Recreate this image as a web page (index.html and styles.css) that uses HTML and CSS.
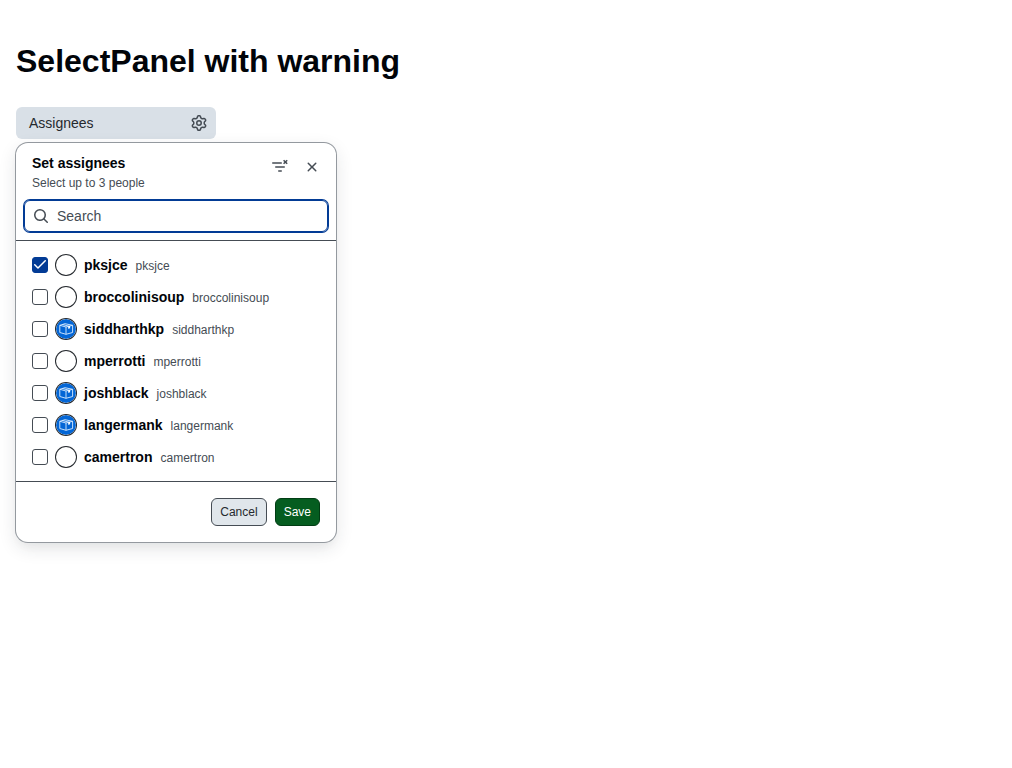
FILE: index.html
```html
<!DOCTYPE html>
<html lang="en">
<head>
<meta charset="utf-8">
<meta name="viewport" content="width=device-width, initial-scale=1">
<title>SelectPanel with warning</title>
<link rel="stylesheet" href="styles.css">
</head>
<body>
<svg class="sprite" aria-hidden="true">
  <symbol id="package" viewBox="0 0 20 20">
    <circle cx="10" cy="10" r="10" fill="#0366d6"/>
    <g fill="none" stroke="#dbedff" stroke-width=".9" stroke-linejoin="round">
      <path d="M3.8 6.3L9 4.7l7.6 1.6v7.2L10 15.3l-6.2-1.8zM3.8 6.3L10 8l6.600-1.700M10 8v7.300"/>
      <path d="M6.400 5.500L13 7.200v2.600"/>
    </g>
    <path d="M12.300 7.300l1.800-.5v2.800l-.9-.7-.9 1.100z" fill="#fff"/>
  </symbol>
</svg>
<main class="page">
  <h1 class="title">SelectPanel with warning</h1>
  <div class="select">
    <button class="trigger" type="button" aria-expanded="true" aria-controls="panel">
      <span>Assignees</span>
      <svg class="icon" viewBox="0 0 16 16" aria-hidden="true"><path d="M8 0a8.2 8.2 0 0 1 .701.031C9.444.095 9.99.645 10.16 1.29l.288 1.107c.018.066.079.158.212.224.231.114.454.243.668.386.123.082.233.09.299.071l1.103-.303c.644-.176 1.392.021 1.82.63.27.385.506.792.704 1.218.315.675.111 1.422-.364 1.891l-.814.806c-.049.048-.098.147-.088.294.016.257.016.515 0 .772-.01.147.038.246.088.294l.814.806c.475.469.679 1.216.364 1.891a7.977 7.977 0 0 1-.704 1.217c-.428.61-1.176.807-1.82.63l-1.102-.302c-.067-.019-.177-.011-.3.071a5.909 5.909 0 0 1-.668.386c-.133.066-.194.158-.211.224l-.29 1.106c-.168.646-.715 1.196-1.458 1.26a8.006 8.006 0 0 1-1.402 0c-.743-.064-1.289-.614-1.458-1.26l-.289-1.106c-.018-.066-.079-.158-.212-.224a5.738 5.738 0 0 1-.668-.386c-.123-.082-.233-.09-.299-.071l-1.103.303c-.644.176-1.392-.021-1.82-.63a8.12 8.12 0 0 1-.704-1.218c-.315-.675-.111-1.422.363-1.891l.815-.806c.05-.048.098-.147.088-.294a6.214 6.214 0 0 1 0-.772c.01-.147-.038-.246-.088-.294l-.815-.806C.635 6.045.431 5.298.746 4.623a7.92 7.92 0 0 1 .704-1.217c.428-.61 1.176-.807 1.82-.63l1.102.302c.067.019.177.011.3-.071.214-.143.437-.272.668-.386.133-.066.194-.158.211-.224l.29-1.106C6.009.645 6.556.095 7.299.03 7.53.01 7.764 0 8 0Zm-.571 1.525c-.036.003-.108.036-.137.146l-.289 1.105c-.147.561-.549.967-.998 1.189-.173.086-.34.183-.5.29-.417.278-.97.423-1.529.27l-1.103-.303c-.109-.03-.175.016-.195.045-.22.312-.412.644-.573.99-.014.031-.021.11.059.19l.815.806c.411.406.562.957.53 1.456a4.709 4.709 0 0 0 0 .582c.032.499-.119 1.05-.53 1.456l-.815.806c-.081.08-.073.159-.059.19.162.346.353.677.573.989.02.03.085.076.195.046l1.102-.303c.56-.153 1.113-.008 1.53.27.161.107.328.204.501.29.447.222.85.629.997 1.189l.289 1.105c.029.109.101.143.137.146a6.6 6.6 0 0 0 1.142 0c.036-.003.108-.036.137-.146l.289-1.105c.147-.561.549-.967.998-1.189.173-.086.34-.183.5-.29.417-.278.97-.423 1.529-.27l1.103.303c.109.029.175-.016.195-.045.22-.313.411-.644.573-.99.014-.031.021-.11-.059-.19l-.815-.806c-.411-.406-.562-.957-.53-1.456a4.709 4.709 0 0 0 0-.582c-.032-.499.119-1.05.53-1.456l.815-.806c.081-.08.073-.159.059-.19a6.464 6.464 0 0 0-.573-.989c-.02-.03-.085-.076-.195-.046l-1.102.303c-.56.153-1.113.008-1.53-.27a4.44 4.44 0 0 0-.501-.29c-.447-.222-.85-.629-.997-1.189l-.289-1.105c-.029-.11-.101-.143-.137-.146a6.6 6.6 0 0 0-1.142 0ZM11 8a3 3 0 1 1-6 0 3 3 0 0 1 6 0ZM9.5 8a1.5 1.5 0 1 0-3.001.001A1.5 1.5 0 0 0 9.5 8Z"/></svg>
    </button>
    <form class="panel" id="panel" role="dialog" aria-labelledby="panel-title" aria-describedby="panel-description">
      <header class="header">
        <div class="heading">
          <div class="heading-text">
            <h2 class="panel-title" id="panel-title">Set assignees</h2>
            <p class="description" id="panel-description">Select up to 3 people</p>
          </div>
          <button class="icon-button" type="button" aria-label="Clear selection">
            <svg class="icon" viewBox="0 0 16 16" aria-hidden="true"><path d="M.75 3.25h8.5a.75.75 0 0 1 0 1.5H.75a.75.75 0 0 1 0-1.5ZM3.75 7.25h8.5a.75.75 0 0 1 0 1.5h-8.5a.75.75 0 0 1 0-1.5ZM6.75 11.25h2.5a.75.75 0 0 1 0 1.5h-2.5a.75.75 0 0 1 0-1.5Z"/><path d="M11.6 1.2l3.6 3.6m0-3.6l-3.6 3.6" fill="none" stroke="currentColor" stroke-width="1.5"/></svg>
          </button>
          <button class="icon-button" type="button" aria-label="Close">
            <svg class="icon" viewBox="0 0 16 16" aria-hidden="true"><path d="M3.72 3.72a.75.75 0 0 1 1.06 0L8 6.94l3.22-3.22a.75.75 0 1 1 1.06 1.06L9.06 8l3.22 3.22a.75.75 0 1 1-1.06 1.06L8 9.06l-3.22 3.22a.75.75 0 0 1-1.06-1.06L6.94 8 3.72 4.78a.75.75 0 0 1 0-1.06Z"/></svg>
          </button>
        </div>
        <label class="search">
          <svg class="icon" viewBox="0 0 16 16" aria-hidden="true"><path d="M10.68 11.74a6 6 0 0 1-7.922-8.982 6 6 0 0 1 8.982 7.922l3.04 3.04a.749.749 0 0 1-1.06 1.06ZM11.5 7a4.499 4.499 0 1 0-8.997 0A4.499 4.499 0 0 0 11.5 7Z"/></svg>
          <input class="search-input" type="text" placeholder="Search" aria-label="Search">
        </label>
      </header>
      <ul class="list">
        <li><label class="row"><input class="check" type="checkbox" checked><span class="avatar"></span><span class="person"><b class="name">pksjce</b><span class="login">pksjce</span></span></label></li>
        <li><label class="row"><input class="check" type="checkbox"><span class="avatar"></span><span class="person"><b class="name">broccolinisoup</b><span class="login">broccolinisoup</span></span></label></li>
        <li><label class="row"><input class="check" type="checkbox"><svg class="avatar" aria-hidden="true"><use href="#package"/></svg><span class="person"><b class="name">siddharthkp</b><span class="login">siddharthkp</span></span></label></li>
        <li><label class="row"><input class="check" type="checkbox"><span class="avatar"></span><span class="person"><b class="name">mperrotti</b><span class="login">mperrotti</span></span></label></li>
        <li><label class="row"><input class="check" type="checkbox"><svg class="avatar" aria-hidden="true"><use href="#package"/></svg><span class="person"><b class="name">joshblack</b><span class="login">joshblack</span></span></label></li>
        <li><label class="row"><input class="check" type="checkbox"><svg class="avatar" aria-hidden="true"><use href="#package"/></svg><span class="person"><b class="name">langermank</b><span class="login">langermank</span></span></label></li>
        <li><label class="row"><input class="check" type="checkbox"><span class="avatar"></span><span class="person"><b class="name">camertron</b><span class="login">camertron</span></span></label></li>
      </ul>
      <footer class="footer">
        <button class="button" type="button">Cancel</button>
        <button class="button primary" type="submit">Save</button>
      </footer>
    </form>
  </div>
</main>
</body>
</html>
```

FILE: styles.css
```css
* { box-sizing: border-box; }

body {
  margin: 0;
  background: #fff;
  color: #010409;
  font: 14px/21px "Liberation Sans", Arial, sans-serif;
}

.sprite { position: absolute; width: 0; height: 0; }

.page { min-height: 100vh; padding: 16px; display: flow-root; }

.title { margin: 21px 0; font-size: 32px; line-height: 49px; }

.icon { flex: none; width: 16px; height: 16px; fill: currentColor; }

button, input { margin: 0; font: inherit; }

.select { position: relative; }

.trigger {
  display: flex;
  align-items: center;
  justify-content: space-between;
  width: 200px;
  height: 32px;
  padding: 0 9px 0 13px;
  border: 0;
  border-radius: 6px;
  background: #d9e0e7;
  color: #25292e;
}

.trigger .icon { color: #454c54; }

.panel {
  position: absolute;
  top: 100%;
  left: 0;
  width: 320px;
  margin-top: 4px;
  border-radius: 12px;
  background: #fff;
  box-shadow: 0 0 0 1px #94999f, 0 6px 12px -3px #25292e0a, 0 6px 18px 0 #25292e1f;
}

.header { padding: 8px; border-bottom: 1px solid #454c54; }

.heading { display: flex; align-items: flex-start; padding-bottom: 8px; }

.heading-text { flex: 1; padding: 2px 0 0 8px; }

.panel-title { margin: 0; font-size: 14px; line-height: 21px; }

.description { margin: 0; color: #454c54; font-size: 12px; line-height: 18px; }

.icon-button {
  display: grid;
  place-items: center;
  width: 32px;
  height: 32px;
  padding: 0;
  border: 0;
  border-radius: 6px;
  background: none;
  color: #454c54;
}

.search {
  display: flex;
  align-items: center;
  gap: 8px;
  height: 32px;
  padding: 0 8px;
  border: 1px solid #023b95;
  border-radius: 6px;
  box-shadow: 0 0 0 1px #023b95;
  color: #454c54;
}

.search-input {
  flex: 1;
  min-width: 0;
  padding: 0;
  border: 0;
  outline: 0;
  background: none;
  color: #010409;
}

.search-input::placeholder { color: #454c54; opacity: 1; }

.list { margin: 0; padding: 8px; list-style: none; }

.row { display: flex; align-items: center; gap: 8px; height: 32px; padding: 0 8px; }

.check {
  appearance: none;
  display: grid;
  place-items: center;
  width: 16px;
  height: 16px;
  border: 1px solid #454c54;
  border-radius: 3px;
  background: #fff;
}

.check:checked { border-color: #023b95; background: #023b95; }

.check:checked::before {
  content: "";
  width: 12px;
  height: 10px;
  background: #fff;
  clip-path: path("M11.78.22a.75.75 0 0 1 0 1.061L4.52 8.541a.75.75 0 0 1-1.062 0L.202 5.285a.75.75 0 0 1 1.061-1.061l2.725 2.723L10.718.22a.75.75 0 0 1 1.062 0Z");
}

.avatar {
  flex: none;
  width: 20px;
  height: 20px;
  border-radius: 50%;
  box-shadow: 0 0 0 1px #25292e;
}

.person { display: flex; align-items: baseline; gap: 8px; line-height: 20px; }

.login { color: #454c54; font-size: 12px; }

.footer {
  display: flex;
  justify-content: flex-end;
  gap: 8px;
  padding: 16px;
  border-top: 1px solid #454c54;
}

.button {
  height: 28px;
  padding: 0 8px;
  border: 1px solid #454c54;
  border-radius: 6px;
  background: #e0e6eb;
  color: #25292e;
  font-size: 12px;
}

.primary { border-color: #013d14; background: #055d20; color: #fff; }
```
